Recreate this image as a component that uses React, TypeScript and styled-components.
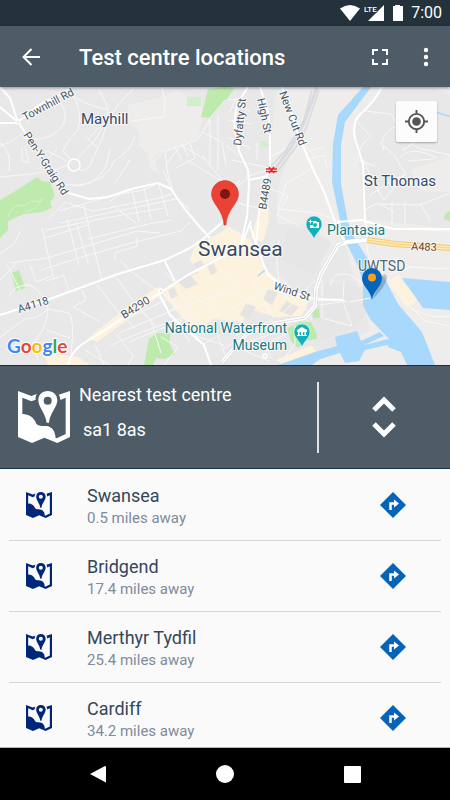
import React from "react";
import styled, { createGlobalStyle } from "styled-components";

const GlobalStyle = createGlobalStyle`
  *, *::before, *::after { box-sizing: border-box; }
  body { margin: 0; background: #fafafa; font-family: Roboto, sans-serif; }
  h1, h2, p, ul { margin: 0; padding: 0; font-weight: 400; }
  button { margin: 0; padding: 0; border: 0; background: none; color: inherit; font: inherit; cursor: pointer; }
  svg { display: block; flex: none; }
`;

const Screen = styled.div`
  display: flex;
  flex-direction: column;
  height: 100vh;
  overflow: hidden;
`;

const StatusBar = styled.div`
  display: flex;
  flex: none;
  align-items: center;
  justify-content: flex-end;
  height: 26px;
  padding: 0 8px;
  background: #23323b;
  color: #fff;
`;

const SignalLabel = styled.text`
  fill: #fff;
  stroke: #23323b;
  stroke-width: 1px;
  paint-order: stroke;
  font-family: Roboto, sans-serif;
  font-size: 8px;
  font-weight: 500;
`;

const Clock = styled.time`
  margin-left: 7px;
  font-size: 16px;
  line-height: 26px;
`;

const Toolbar = styled.header`
  position: relative;
  z-index: 1;
  display: flex;
  flex: none;
  align-items: center;
  height: 61px;
  padding: 0 2px 0 16px;
  background: #4d5c66;
  color: #fff;
  box-shadow: 0 1px 3px rgba(0, 0, 0, 0.4);
`;

const Title = styled.h1`
  && {
    flex: 1;
    padding: 2px 0 0 33px;
    font-size: 22px;
    font-weight: 500;
    line-height: 28px;
  }
`;

const IconButton = styled.button<{ $width: number }>`
  display: grid;
  place-items: center;
  flex: none;
  width: ${(p) => p.$width}px;
  height: 48px;
`;

const MapPanel = styled.section`
  position: relative;
  flex: none;
  height: 278px;
  background: #e8e8e8;
`;

const LocateButton = styled.button`
  && {
    position: absolute;
    top: 14px;
    right: 13px;
    display: grid;
    place-items: center;
    width: 41px;
    height: 41px;
    border-radius: 2px;
    background: rgba(255, 255, 255, 0.85);
    box-shadow: 0 1px 2px rgba(0, 0, 0, 0.3);
  }
`;

const SearchPanel = styled.section`
  display: flex;
  flex: none;
  align-items: center;
  height: 104px;
  padding: 0 41px 0 18px;
  border-top: 1px solid #14304a;
  border-bottom: 1px solid #14304a;
  background: #4d5c66;
  color: #fff;
`;

const SearchText = styled.div`
  flex: 1;
  align-self: flex-start;
  padding: 17px 0 0 9px;
`;

const SearchTitle = styled.h2`
  font-size: 18px;
  line-height: 24px;
`;

const Postcode = styled.p`
  && {
    padding: 11px 0 0 4px;
    font-size: 18px;
    line-height: 24px;
  }
`;

const Divider = styled.div`
  width: 2px;
  height: 71px;
  margin-right: 40px;
  background: #dfe3e5;
`;

const CentreList = styled.ul`
  && {
    flex: 1 1 0;
    min-height: 0;
    overflow-y: auto;
    scrollbar-width: none;
    list-style: none;
    padding: 0 9px;
    border-bottom: 1px solid #b5b5b5;
    background: #fafafa;
  }
`;

const CentreRow = styled.li`
  display: flex;
  align-items: center;
  height: 71px;
  padding: 0 17px;
  color: #00267a;

  & + & { border-top: 1px solid #d6d6d6; }
`;

const CentreText = styled.div`
  flex: 1;
  padding: 3px 0 0 35px;
`;

const CentreName = styled.h2`
  color: #33475a;
  font-size: 18px;
  line-height: 23px;
`;

const Distance = styled.p`
  color: #7d8c9a;
  font-size: 15px;
  line-height: 22px;
`;

const NavBar = styled.nav`
  display: flex;
  flex: none;
  align-items: center;
  justify-content: space-between;
  height: 52px;
  padding: 0 74px;
  background: #000;
  color: #fff;
`;

const MapIcon = ({ size }: { size: number }) => (
  <svg width={size} height={size} viewBox="0 0 156 156" fill="currentColor" aria-hidden="true">
    <path
      fillRule="evenodd"
      d="M0 0L40 15L57 9C53 14 52 20 53 26L40 31L13 20V69C34 70 47 78 55 98C62 106 72 104 84 105C103 106 112 122 113 142L118 141L143 129V20L127 27C127 20 125 14 122 11L156 0V138L118 156L79 140L42 156L0 138Z"
    />
    <path
      fillRule="evenodd"
      d="M89 0C72 0 61 12 61 28C61 48 82 66 86 95H93C96 66 118 48 118 28C118 12 106 0 89 0ZM89 17A12 12 0 1 1 89 41A12 12 0 1 1 89 17Z"
    />
  </svg>
);

const DirectionsIcon = () => (
  <svg width="26" height="26" viewBox="0 0 26 26" aria-hidden="true">
    <path d="M13 0L26 13L13 26L0 13Z" fill="#0564b8" />
    <path d="M10.500 18V11.500H15" fill="none" stroke="#fff" strokeWidth="2.500" />
    <path d="M14 7.500L19 11.500L14 15.500Z" fill="#fff" />
  </svg>
);

const park = "#bfeaae";
const water = "#a9d8fd";
const built = "#fcf2de";

const minorRoads = `
M58 99Q72 117 59 130Q45 143 24 138 M71 92Q84 112 78 130Q66 143 63 151L70 159
M60 87Q85 107 107 109 M98 87L108 108Q108 128 98 148L90 165Q85 173 78 169
M134 88L118 105L94 141L77 159 M0 177L32 174L58 169L67 165 M0 146Q16 140 22 133
M0 143Q12 151 9 171 M25 146L29 163L22 161V148 M45 150L62 158L67 162
M39 169L57 149 M84 135L98 148 M88 139L98 128 M99 129L112 115 M63 184Q94 190 106 166L110 150
M70 185L80 186Q109 179 114 161Q131 151 135 136 M115 183L130 160V162
M162 87L165 101L164 117L131 121 M225 100L211 117L198 140L163 152L153 163
M167 163L181 145L206 160 M163 170L173 193 M165 151L168 175L174 193 M175 147L182 161 M182 145L188 156 M190 144L195 158L176 168
M210 120V165 M218 115V170 M202 132L222 142L226 166 M202 155L225 184 M187 160L221 181
M109 202L120 194L144 190L155 185 M112 205L136 223 M83 204L89 225 M67 203L94 211L160 198L172 194
M59 211L132 190 M132 190L139 222 M144 187L151 220 M159 185L168 216 M47 220L66 202
M60 223L176 199L190 209 M46 230L105 218L164 208 M88 225L102 280 M76 222L88 263
M10 263L47 258L137 231L160 233 M42 228L54 280 M45 238L88 225 M67 219L79 265
M41 270L85 256L135 242L181 231L190 222 M46 281L62 276 M30 265L36 282L52 276
M115 260V253L137 246V237 M88 239L148 224L172 220 M120 260L129 270L158 291 M97 285L117 311L135 328
M117 278L134 302L157 327 M82 290L86 300L73 307L99 321 M63 274L69 291 M9 297Q12 285 30 285Q44 292 48 309Q47 330 32 344L38 360
M0 337L25 319Q39 319 47 309 M6 263L20 290 M0 280L12 268L17 262 M0 254L15 243L20 231
M48 309L69 313Q75 320 71 354 M70 338L47 330 M165 272L173 281 M165 261L175 280
M109 325L141 312L168 299 M119 333L176 309 M129 342L182 320 M111 345L137 334L192 314 M140 309L151 321L161 353
M95 345L104 365 M117 335L133 356L128 365 M85 350L109 365 M158 296L190 342 M168 296L204 333
M170 310L238 290 M181 294L197 323 M186 292L216 310 M161 337L178 347L164 365 M193 335L224 345
M232 160L270 168 M228 137L250 148 M230 194L249 176L276 167 M226 145L238 156 M230 112L236 98
M234 202L258 208 M239 180L231 197 M278 209L317 213L337 220 M278 209L286 184L314 167
M305 145L316 158 M306 160L324 155L327 168 M311 150L323 147 M270 157L293 145 M277 215L300 226
M365 111L391 114Q404 137 418 148L450 155 M357 122L371 136Q358 145 358 160L375 166
M379 142L394 155L405 173L401 184L421 181 M384 150Q377 138 394 127 M399 159Q410 144 437 158
M394 128L409 121 M402 151L421 138 M408 161L434 159 M364 161L374 184L384 200L405 174
M369 196L393 180L407 174 M365 210L375 204L420 205L450 193 M392 202V225 M405 202V225 M420 203L431 222 M378 203L394 212
M240 105L250 112 M228 100L245 98 M229 120L252 124 M257 143V160 M260 184L288 196L276 217
M275 290L304 300L346 301 M322 279V318 M344 281L343 302L352 326L322 318 M330 286Q332 270 350 275L367 286
M303 303L312 320 M319 305L347 301 M349 302L370 298 M280 277L306 304 M253 281L274 318 M225 270L248 305 M281 289Q274 264 279 240
M227 312L248 299L279 282 M202 345L227 331L280 320 M230 320L245 351L269 361 M216 330L227 361
M250 341L278 332 M258 330L272 359 M224 348L245 337 M262 345L285 335 M278 318L315 280 M295 325V344L285 358
M385 228L450 231 M394 257L410 267L450 269 M388 275L411 267 M411 309Q430 319 450 316
M366 239L370 265L391 281L407 303L425 321L450 326`;

const majorRoads = `
M0 87L10 98L18 122L0 107 M0 123H18 M18 122L39 105L57 96L72 87 M18 122L39 153L61 189L69 193L89 199L108 197L131 189L158 183L171 189L184 208L199 226L210 238
M0 315L47 300L80 288L118 274L165 260L190 248L203 239L225 220
M68 365Q70 354 81 345L116 323L158 294L186 276L222 257L240 249L251 221
M165 262L175 281 M159 293L170 315L188 331L204 345L211 365
M248 87L237 104L234 124L239 151L248 170L249 184L247 217L240 248
M260 87L268 112L270 132V166L265 182L259 211L256 247
M249 180L268 176 M282 87L299 137L313 169L325 194L336 225L344 240
M382 87Q376 99 364 111Q351 120 355 138L363 164L365 218L367 241
M337 222L362 220L375 224L394 229L450 229
M250 225L258 250L268 275L291 292L315 299L343 300`;

const MapLabel = styled.text<{ $size: number; $color?: string }>`
  fill: ${(p) => p.$color ?? "#46535f"};
  stroke: rgba(255, 255, 255, 0.75);
  stroke-width: 2px;
  stroke-linejoin: round;
  paint-order: stroke;
  font-family: Roboto, sans-serif;
  font-size: ${(p) => p.$size}px;
`;

const GoogleText = styled.text`
  stroke: #fff;
  stroke-width: 2px;
  paint-order: stroke;
  font-family: Lato, sans-serif;
  font-size: 19px;
  font-weight: 700;
`;

const CityMap = () => (
  <svg width="100%" height="100%" viewBox="0 87 450 278" preserveAspectRatio="xMidYMid slice" role="img" aria-label="Map of Swansea">
    <rect x="0" y="87" width="450" height="278" fill="#e8e8e8" />
    <path fill="#eeedeb" d="M128 105L163 97L178 90L188 98H201L203 114L198 139L188 143L162 152L154 158L160 174L151 169L147 153L138 145L140 133L129 123Z" />
    <path fill="#eeedeb" d="M300 87H450V95L432 87H385L365 108L355 120L358 158L366 219L450 229V365H312L370 330L362 300L352 270L344 242L322 275L316 238L304 224H277V195L284 167L303 130Z" />
    <path fill="#eeedeb" d="M433 162L450 155V192L421 191L410 170Z M276 90L300 87L316 88L304 127L278 170L270 163Z" />
    <path fill="#e6e6e6" d="M326 283L368 287L374 302L355 328L318 342L313 320Z M286 230L312 229L332 243L313 275L283 261Z" />

    <g fill={built}>
      <path d="M160 291L182 279L199 273L190 260L194 247L225 230L250 239L261 262L273 276L309 301L302 316L276 317L250 309L242 322L213 319L197 333L180 315Z" />
      <path d="M88 338L131 304L158 287L165 291L143 309L97 342Z" />
      <path d="M262 201L269 208L268 225L263 242L251 238Z" />
      <path d="M225 225L246 236V249L235 265L223 260Z M43 352L78 357L90 365H48Z" />
      <path d="M387 282L397 275L418 300L407 308Z M276 360L312 345L316 353L284 365Z" />
    </g>
    <g fill="#e5e4e3">
      <path d="M178 282L190 275L198 284L186 289Z M206 263L213 261L217 272L211 275Z M168 290L174 287L178 296L171 299Z M193 264L201 260L205 266L197 270Z M246 303L256 307L248 319L240 315Z M268 289L278 293L272 305L263 300Z M211 328L224 320L229 333L216 338Z M286 301L299 307L291 316L279 311Z" />
    </g>

    <g fill={park}>
      <path d="M0 200L19 189L37 177L42 181L50 182L55 196L50 202L52 208L42 212L24 214L8 221L8 230L0 238Z" />
      <path d="M208 89L225 87L235 88L225 101L211 118L201 117L204 106Z" />
      <path d="M11 273L19 270L25 288L16 291Z" />
      <path fill="#d2efcb" d="M187 97H201V106H187Z M260 141H268V147H260Z" />
      <path d="M149 339L157 333L170 333V345L175 354L165 359L156 358L153 365H144Z" />
      <path d="M287 328L300 322H311L316 332L317 339L305 341L298 348L291 341Z M312 311L319 308L320 318L313 318Z M445 214L450 211V221L444 219Z" />
    </g>
    <path fill="none" stroke="#d6f2ca" strokeWidth="1" d="M8 217Q13 202 24 206L32 201L39 202L42 198 M25 211Q34 213 43 198" />

    <g fill={water}>
      <path d="M363 87L338 115L333 144L332 182L341 225L346 242L358 266L363 282V305L370 319L389 339L388 347L401 352L407 365H435L422 332L398 304L385 279L371 264L354 237L348 222L341 184V145L345 122L371 87Z" />
      <path d="M402 278L450 282V310L423 308Z" />
      <path d="M278 365L315 352L337 346L335 337L357 331L361 341L380 332L384 336L364 345L388 339L392 344L365 350L359 361L345 363L340 353L320 359L312 365Z" />
    </g>
    <path fill="none" stroke={water} strokeWidth="1.5" d="M436 112Q443 115 450 116 M258 276L265 270" />

    <path fill="none" stroke="#f8f8f8" strokeWidth="1" strokeLinejoin="round" d={minorRoads} />
    <g fill="none" stroke="#d8dade" strokeWidth="1.5">
      <path strokeWidth="3" d="M317 87L304 123L291 147L275 169" />
      <path d="M312 90L304 120L286 150L271 166 M319 90L307 126L296 147L277 172" />
    </g>
    <path fill="none" stroke="#fff" strokeWidth="2" strokeLinejoin="round" d={majorRoads} />
    <g fill="none" strokeLinejoin="round">
      <path stroke="#dadada" strokeWidth="5" d="M367 240L347 242L338 245L321 274L316 289L315 306L305 318L276 323L247 334L222 362" />
      <path stroke="#fff" strokeWidth="4" d="M367 240L347 242L338 245L321 274L316 289L315 306L305 318L276 323L247 334L222 362" />
      <path stroke="#dfdfdf" strokeWidth="1" d="M344 242L337 246L321 274L316 289L315 306L305 318L276 323L247 334L222 362" />
      <path stroke="#f0c878" strokeWidth="6" d="M367 240L395 244L450 248" />
      <path stroke="#ffeab0" strokeWidth="4" d="M367 240L395 244L450 248" />
      <path stroke="#f5cf7d" strokeWidth="1" d="M367 240L395 244L450 248" />
    </g>
    <g fill="#e8e8e8" stroke="#fff" strokeWidth="1.5">
      <circle cx="74" cy="165" r="6" />
      <circle cx="161" cy="291" r="2" />
      <circle cx="18" cy="122" r="2" />
      <circle cx="265" cy="356" r="2" />
    </g>

    <MapLabel $size={11} transform="translate(25 121) rotate(-28)">Townhill Rd</MapLabel>
    <MapLabel $size={11} transform="translate(23 135) rotate(57)">Pen-Y-Graig Rd</MapLabel>
    <MapLabel $size={11} transform="translate(241 146) rotate(-84)">Dyfatty St</MapLabel>
    <MapLabel $size={11} transform="translate(257 99) rotate(78)">High St</MapLabel>
    <MapLabel $size={11} transform="translate(279 93) rotate(69)">New Cut Rd</MapLabel>
    <MapLabel $size={11} transform="translate(266 210) rotate(-80)">B4489</MapLabel>
    <MapLabel $size={11} transform="translate(19 313) rotate(-17)">A4118</MapLabel>
    <MapLabel $size={11} transform="translate(124 319) rotate(-32)">B4290</MapLabel>
    <MapLabel $size={11} transform="translate(273 289) rotate(18)">Wind St</MapLabel>
    <MapLabel $size={11} $color="#6e432d" transform="translate(411 250) rotate(2)">A483</MapLabel>
    <MapLabel $size={15} $color="#374a64" x="81" y="124">Mayhill</MapLabel>
    <MapLabel $size={15} $color="#374a64" x="364" y="186">St Thomas</MapLabel>
    <MapLabel $size={21} $color="#374a64" x="198" y="256">Swansea</MapLabel>
    <MapLabel $size={14} $color="#54646f" x="358" y="271">UWTSD</MapLabel>
    <MapLabel $size={14} $color="#147a80" x="327" y="235">Plantasia</MapLabel>
    <MapLabel $size={14} $color="#147a80" x="287" y="333" textAnchor="end">National Waterfront</MapLabel>
    <MapLabel $size={14} $color="#147a80" x="287" y="350" textAnchor="end">Museum</MapLabel>

    <path fill="none" stroke="#fff" strokeWidth="4" d="M267 170H277" />
    <path fill="none" stroke="#e5242c" strokeWidth="1.500" d="M266 169H277M266 171.500H277M269 167L274 173M274 167L269 173" />

    <g fill="#12b0bd" stroke="#fff" strokeWidth="0.5">
      <path d="M314 216A8 8 0 0 0 306 224C306 230 312 233 314 239C316 233 322 230 322 224A8 8 0 0 0 314 216Z" />
      <path d="M302 324A8 8 0 0 0 294 332C294 338 300 341 302 347C304 341 310 338 310 332A8 8 0 0 0 302 324Z" />
    </g>
    <path fill="none" stroke="#fff" strokeWidth="1" d="M308.500 221.500H312.500M310.500 219.500V223.500" />
    <path fill="#fff" fillRule="evenodd" d="M313 221H316L317 222H319V228H310V225H313ZM315 223A2 2 0 1 0 315 227A2 2 0 1 0 315 223Z" />
    <path fill="#fff" fillRule="evenodd" d="M302 327L307 330V332H306V335H307V336H297V335H298V332H297V330ZM299.500 332V335H301V332ZM303 332V335H304.500V332Z" />

    <path fill="#000" fillOpacity="0.2" d="M373 299L379 279Q386 270 387 278Q386 286 373 299Z" />
    <path fill="#0664bc" d="M372 268A10 10 0 0 0 362 278C362 287 370 289 372 300C374 289 382 287 382 278A10 10 0 0 0 372 268Z" />
    <circle cx="372" cy="277.500" r="4" fill="#f9a11b" />
    <path fill="#ea4335" stroke="#cf3226" strokeWidth="0.5" d="M225 180.500A13.500 13.500 0 0 0 211.500 194C211.500 204 223 209 224 225H226C227 209 238.500 204 238.500 194A13.500 13.500 0 0 0 225 180.500Z" />
    <circle cx="225" cy="194" r="5" fill="#7d1713" />

    <GoogleText x="7" y="353">
      <tspan fill="#4285f4">G</tspan><tspan fill="#ea4335">o</tspan><tspan fill="#fbbc05">o</tspan><tspan fill="#4285f4">g</tspan><tspan fill="#34a853">l</tspan><tspan fill="#ea4335">e</tspan>
    </GoogleText>
  </svg>
);

const centres = [
  { name: "Swansea", distance: "0.5 miles away" },
  { name: "Bridgend", distance: "17.4 miles away" },
  { name: "Merthyr Tydfil", distance: "25.4 miles away" },
  { name: "Cardiff", distance: "34.2 miles away" },
];

export default function App() {
  return (
    <>
      <GlobalStyle />
      <Screen>
        <StatusBar>
          <svg width="64" height="20" viewBox="0 0 64 20" fill="#fff" aria-hidden="true">
            <path d="M0 5.500Q10 -1.500 20 5.500L10 18Z" />
            <path d="M44 2V18H28Z" />
            <path d="M53 3H55V2H60V3H63V18H53Z" />
            <SignalLabel x="24" y="9">LTE</SignalLabel>
          </svg>
          <Clock>7:00</Clock>
        </StatusBar>

        <Toolbar>
          <IconButton $width={30} aria-label="Back">
            <svg width="18" height="18" viewBox="0 0 18 18" fill="none" stroke="#fff" strokeWidth="2">
              <path d="M18 9H2M9.500 1L1.500 9L9.500 17" />
            </svg>
          </IconButton>
          <Title>Test centre locations</Title>
          <IconButton $width={48} aria-label="Full screen">
            <svg width="16" height="16" viewBox="0 0 16 16" fill="none" stroke="#fff" strokeWidth="2">
              <path d="M1 6V1H6M10 1H15V6M15 10V15H10M6 15H1V10" />
            </svg>
          </IconButton>
          <IconButton $width={44} aria-label="More options">
            <svg width="6" height="20" viewBox="0 0 6 20" fill="#fff">
              <circle cx="3" cy="3" r="2.200" />
              <circle cx="3" cy="10" r="2.200" />
              <circle cx="3" cy="17" r="2.200" />
            </svg>
          </IconButton>
        </Toolbar>

        <MapPanel>
          <CityMap />
          <LocateButton aria-label="My location">
            <svg width="23" height="23" viewBox="0 0 24 24" fill="none" stroke="#555" strokeWidth="2">
              <circle cx="12" cy="12" r="8" />
              <circle cx="12" cy="12" r="4.500" fill="#555" stroke="none" />
              <path d="M12 0V4M12 20V24M0 12H4M20 12H24" />
            </svg>
          </LocateButton>
        </MapPanel>

        <SearchPanel>
          <MapIcon size={52} />
          <SearchText>
            <SearchTitle>Nearest test centre</SearchTitle>
            <Postcode>sa1 8as</Postcode>
          </SearchText>
          <Divider />
          <IconButton $width={50} aria-label="Change search">
            <svg width="24" height="42" viewBox="0 0 24 42" fill="none" stroke="#fff" strokeWidth="5">
              <path d="M2 14L12 4L22 14M2 28L12 38L22 28" />
            </svg>
          </IconButton>
        </SearchPanel>

        <CentreList>
          {centres.map((centre) => (
            <CentreRow key={centre.name}>
              <MapIcon size={26} />
              <CentreText>
                <CentreName>{centre.name}</CentreName>
                <Distance>{centre.distance}</Distance>
              </CentreText>
              <IconButton $width={62} aria-label={`Directions to ${centre.name}`}>
                <DirectionsIcon />
              </IconButton>
            </CentreRow>
          ))}
        </CentreList>

        <NavBar aria-label="System">
          <IconButton $width={48} aria-label="Back">
            <svg width="16" height="18" viewBox="0 0 16 18" fill="#fff">
              <path d="M0 9L15 1Q16 1 16 2V17Q16 18 15 17Z" />
            </svg>
          </IconButton>
          <IconButton $width={48} aria-label="Home">
            <svg width="18" height="18" viewBox="0 0 18 18" fill="#fff">
              <circle cx="9" cy="9" r="9" />
            </svg>
          </IconButton>
          <IconButton $width={48} aria-label="Recent apps">
            <svg width="17" height="17" viewBox="0 0 17 17" fill="#fff">
              <rect width="17" height="17" rx="1" />
            </svg>
          </IconButton>
        </NavBar>
      </Screen>
    </>
  );
}
